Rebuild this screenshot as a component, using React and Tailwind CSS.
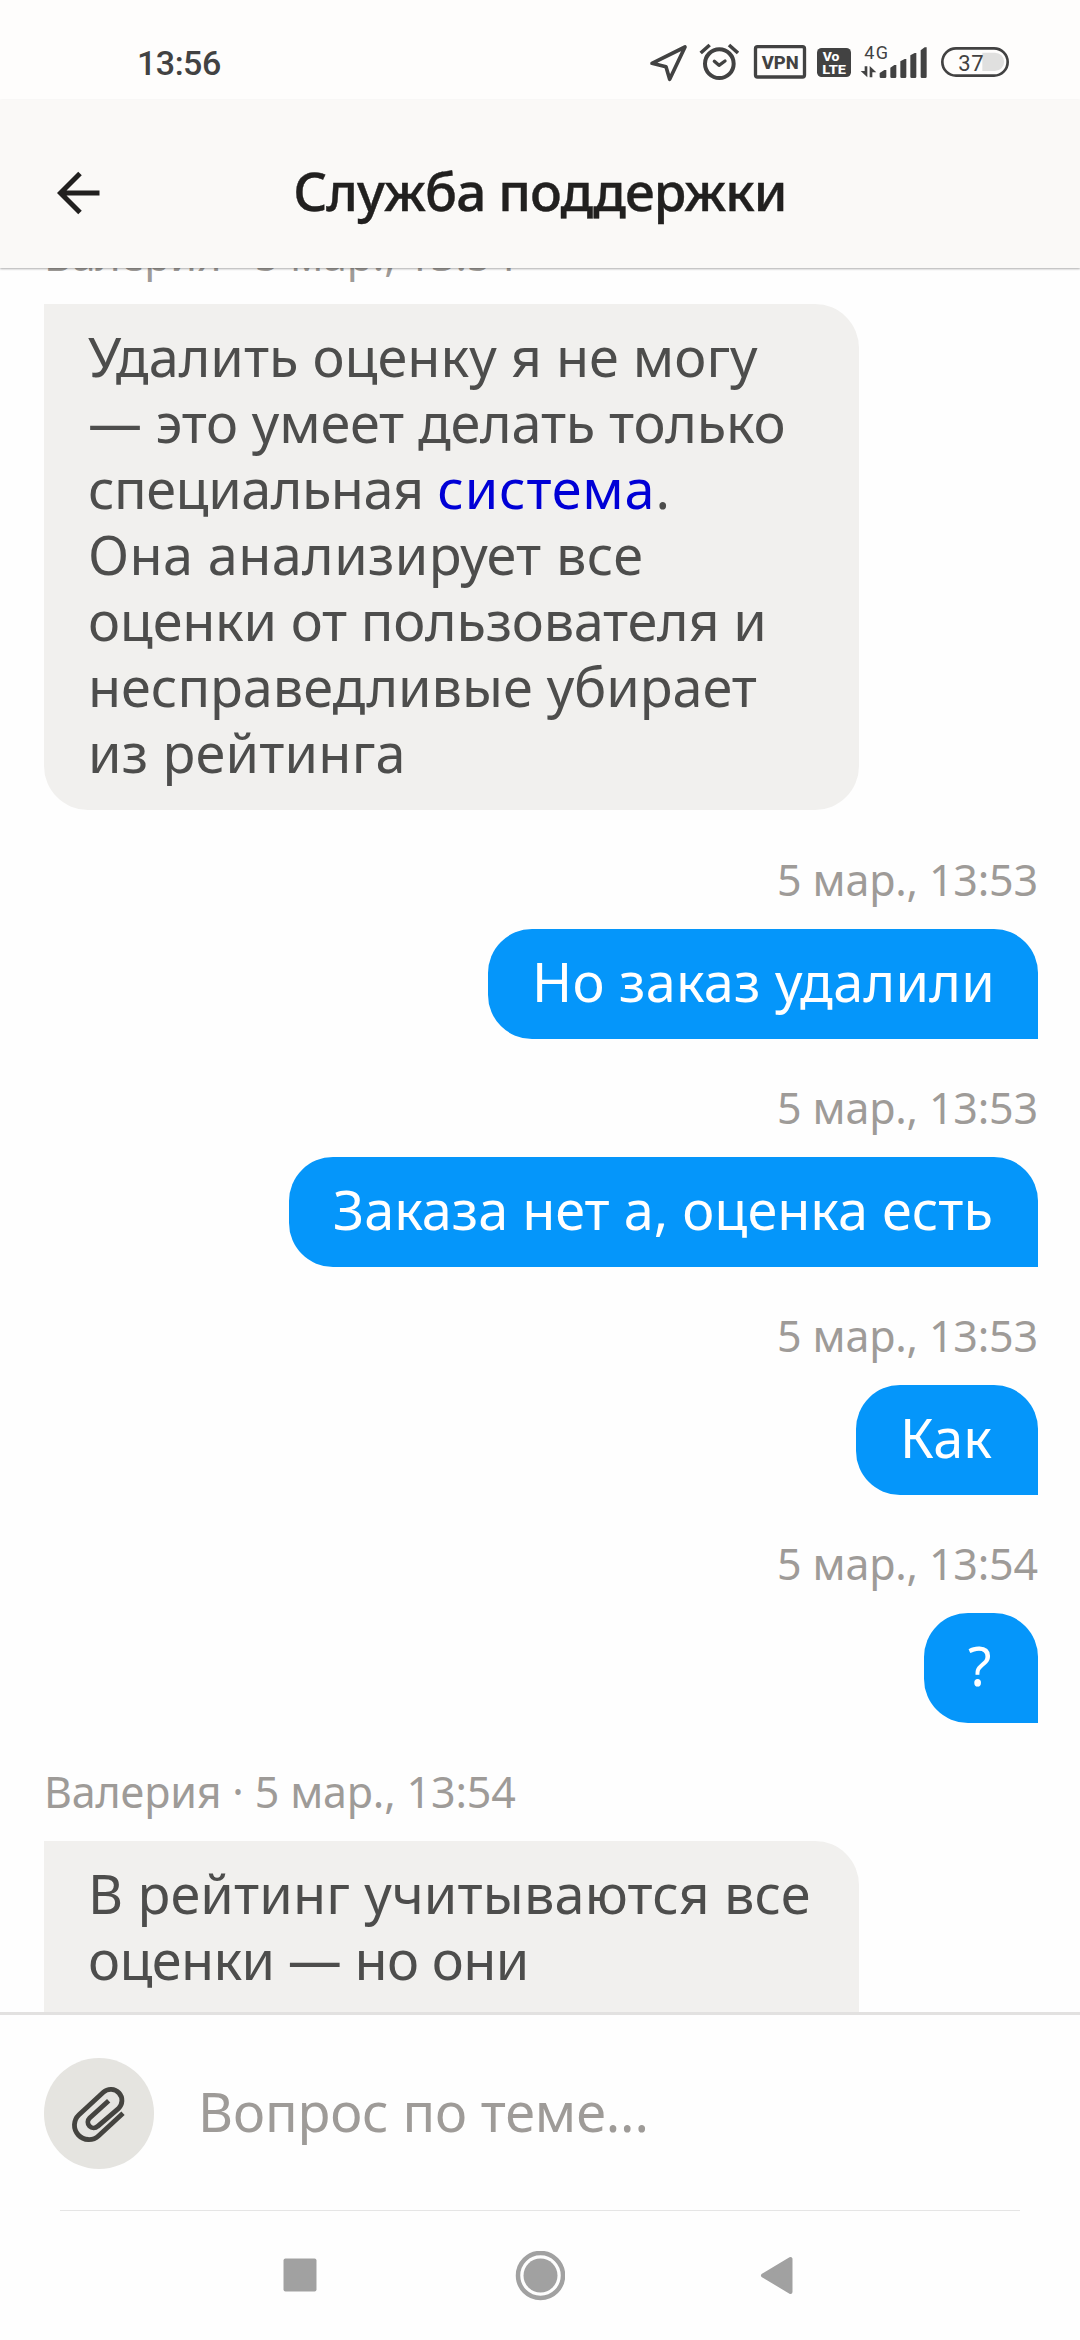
import React from 'react';
import clsx from 'clsx';

const messages = [
    {
        id: 1,
        from: 'agent',
        time: 'Валерия · 5 мар., 13:54',
        lines: [
            { text: 'Удалить оценку я не могу' },
            { text: '— это умеет делать только', tracking: 'tracking-[-0.17px]' },
            { text: 'специальная ', tracking: 'tracking-[-0.5px]', link: 'система', tail: '.' },
            { text: 'Она анализирует все', tracking: 'tracking-[0.37px]' },
            { text: 'оценки от пользователя и', tracking: 'tracking-[-0.23px]' },
            { text: 'несправедливые убирает', tracking: 'tracking-[-0.05px]' },
            { text: 'из рейтинга', tracking: 'tracking-[0.2px]' },
        ],
    },
    { id: 2, from: 'me', time: '5 мар., 13:53', size: 'w-[550px]', lines: [{ text: 'Но заказ удалили', tracking: 'tracking-[0.27px]' }] },
    { id: 3, from: 'me', time: '5 мар., 13:53', size: 'w-[749px]', lines: [{ text: 'Заказа нет а, оценка есть' }] },
    { id: 4, from: 'me', time: '5 мар., 13:53', size: 'w-[182px]', lines: [{ text: 'Как' }] },
    { id: 5, from: 'me', time: '5 мар., 13:54', size: 'w-[114px]', lines: [{ text: '?' }] },
    {
        id: 6,
        from: 'agent',
        time: 'Валерия · 5 мар., 13:54',
        size: 'h-[308px]',
        lines: [
            { text: 'В рейтинг учитываются все', tracking: 'tracking-[0.15px]' },
            { text: 'оценки — но они', tracking: 'tracking-[-0.65px]' },
        ],
    },
];

function StatusBar() {
    return (
        <div className="flex h-[100px] shrink-0 items-start justify-between bg-[#fefdfc] pl-[137px] pr-[70px] pt-[42px] font-['Roboto',sans-serif] text-[#424242]">
            <span className="text-[34px] font-medium leading-[42px] tracking-[-0.5px]">13:56</span>
            <div className="flex">
                {/* location */}
                <svg className="h-[42px] w-[40px]" viewBox="87 66 120 126" fill="none" stroke="#424242" strokeWidth="11" strokeLinejoin="round">
                    <path d="M195 81 149 178 138 140 96 130Z" />
                </svg>
                {/* alarm */}
                <svg className="ml-[9px] h-[42px] w-[42px]" viewBox="234 66 126 126" fill="none" stroke="#424242">
                    <circle cx="298" cy="131" r="43" strokeWidth="12" />
                    <path strokeWidth="11" d="M242 99 269 75M327 75 354 99" />
                    <path strokeWidth="10" strokeLinecap="round" strokeLinejoin="round" d="M283 124 297 136 315 123" />
                </svg>
                <svg className="ml-[13px] h-[42px] w-[54px]" viewBox="399 66 162 126">
                    <rect x="406.500" y="80" width="147" height="91" rx="6" fill="none" stroke="#424242" strokeWidth="10" />
                    <text x="480.500" y="146" textAnchor="middle" textLength="111" lengthAdjust="spacingAndGlyphs" fontSize="54" fontWeight="800" fill="#424242">VPN</text>
                </svg>
                <svg className="ml-[8px] h-[42px] w-[38px]" viewBox="585 66 114 126">
                    <rect x="591" y="84" width="102" height="87" rx="14" fill="#424242" />
                    <text x="608" y="124" textLength="50" lengthAdjust="spacingAndGlyphs" fontSize="38" fontWeight="800" fill="#fff">Vo</text>
                    <text x="607" y="161" textLength="71" lengthAdjust="spacingAndGlyphs" fontSize="39" fontWeight="800" fill="#fff">LTE</text>
                </svg>
                {/* network */}
                <svg className="ml-[7px] h-[42px] w-[70px]" viewBox="720 66 210 126" fill="#424242">
                    <text x="733" y="116" textLength="71" fontSize="54">4G</text>
                    <path d="M734 139h8v33L722 153h12ZM749 138 769 157h-12v15h-8Z" />
                    <path d="M779 170V159L793 150H799V170Q799 174 795 174H783Q779 174 779 170ZM811 170V143L823 135H829V170Q829 174 825 174H815Q811 174 811 170ZM841 170V124L854 117H859V170Q859 174 855 174H845Q841 174 841 170ZM871 170V106L884 99H889V170Q889 174 885 174H875Q871 174 871 170ZM902 170V91L914 82H920V170Q920 174 916 174H906Q902 174 902 170Z" />
                </svg>
                <svg className="ml-[10px] h-[42px] w-[70px]" viewBox="960 66 210 126">
                    <path d="M1087 98h38a27 27 0 0 1 0 55h-38Z" fill="#e0e0df" />
                    <rect x="967" y="85" width="196" height="82" rx="41" fill="none" stroke="#424242" strokeWidth="8" />
                    <text x="1015" y="153" textLength="76" fontSize="66" fill="#424242">37</text>
                </svg>
            </div>
        </div>
    );
}

function Header() {
    return (
        <header className="relative z-10 flex h-[168px] shrink-0 items-center bg-[#faf9f7] pt-[13px] shadow-[0_1px_2px_rgba(0,0,0,0.32)]">
            <button className="ml-[57px] w-[44px]">
                <svg className="mt-[4px] h-[44px] w-[44px]" viewBox="0 0 44 44" fill="none" stroke="#21201f" strokeWidth="5">
                    <path d="M42.500 22H4M23 2.500 3.500 22 23 41.500" />
                </svg>
            </button>
            <h1 className="mr-[101px] flex-1 text-center text-[53px] font-medium leading-[66px] tracking-[-0.95px] text-[#21201f] [-webkit-text-stroke:0.4px_#21201f]">
                Служба поддержки
            </h1>
        </header>
    );
}

function Message({ from, time, lines, size }) {
    const mine = from === 'me';
    return (
        <div className={clsx('flex flex-col first:mb-px', mine ? 'items-end' : 'items-start')}>
            <div className="mb-[24px] text-[43px] leading-[50px] tracking-[-0.16px] text-[#9e9b98]">{time}</div>
            <div
                className={clsx(
                    'whitespace-pre px-[44px] pb-[25px] pt-[19px] text-[54px] leading-[66px]',
                    mine
                        ? 'rounded-[44px] rounded-br-none bg-[#0596fa] text-white'
                        : 'w-[815px] rounded-[44px] rounded-tl-none bg-[#f1f0ee] text-[#4d4d4c]',
                    size
                )}
            >
                {lines.map((line) => (
                    <div key={line.text} className={line.tracking}>
                        {line.text}
                        {line.link && (
                            <a href="#" className="tracking-[0.8px] text-[#0000d6]">
                                {line.link}
                            </a>
                        )}
                        {line.tail}
                    </div>
                ))}
            </div>
        </div>
    );
}

function Composer() {
    return (
        <div className="flex h-[198px] shrink-0 items-start border-t-[3px] border-[#e2e1e0] bg-[#fefefe] pl-[44px] pt-[43px]">
            <button className="flex h-[111px] w-[110px] items-center justify-center rounded-full bg-[#e5e4e0]">
                <svg className="h-[60px] w-[60px]" viewBox="101 236 180 180" fill="none" stroke="#454440" strokeWidth="14.500">
                    <path d="M263 324 190 391A43 43 0 0 1 131 328L204 261A33 33 0 0 1 249 310L187 363A17 17 0 0 1 163 338L220 286" />
                </svg>
            </button>
            <span className="ml-[44px] pt-[20px] text-[54px] leading-[66px] tracking-[-0.15px] text-[#9e9b98]">Вопрос по теме...</span>
        </div>
    );
}

function NavBar() {
    return (
        <div className="flex-1 bg-[#fefefe]">
            <div className="mx-[60px] h-px bg-[#e5e5e5]" />
            <div className="flex pl-[283px] pt-[40px]">
                <svg className="h-[50px] w-[34px]" viewBox="0 0 34 50" fill="#a1a1a1">
                    <rect x="0.500" y="7.500" width="33" height="33" rx="2" />
                </svg>
                <svg className="ml-[198px] h-[50px] w-[50px]" viewBox="0 0 50 50">
                    <circle cx="25.500" cy="24.500" r="22.500" fill="none" stroke="#a1a1a1" strokeWidth="4.500" />
                    <circle cx="25.500" cy="24.500" r="17" fill="#a1a1a1" />
                </svg>
                <svg className="ml-[194px] h-[50px] w-[36px]" viewBox="0 0 36 50" fill="#a1a1a1" stroke="#a1a1a1" strokeWidth="4" strokeLinejoin="round">
                    <path d="M4 24.500 31.500 8V41Z" />
                </svg>
            </div>
        </div>
    );
}

export default function App() {
    return (
        <div className="flex h-[2340px] w-[1080px] flex-col overflow-hidden bg-white font-['Noto_Sans',sans-serif]">
            <StatusBar />
            <Header />
            <main className="h-[1744px] shrink-0 overflow-hidden bg-[#fefefe]">
                <div className="-mt-[38px] flex flex-col gap-[44px] pl-[44px] pr-[42px]">
                    {messages.map((m) => (
                        <Message key={m.id} {...m} />
                    ))}
                </div>
            </main>
            <Composer />
            <NavBar />
        </div>
    );
}
